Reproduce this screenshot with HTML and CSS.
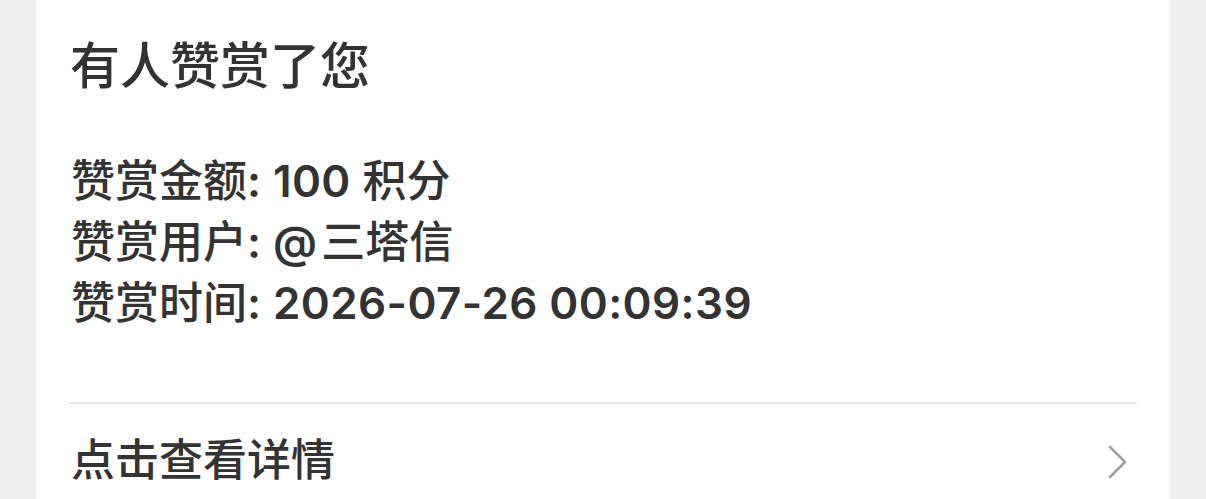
FILE: index.html
```html
<!DOCTYPE html>
<html lang="zh-CN">
<head>
<meta charset="utf-8">
<link rel="stylesheet" href="styles.css">
</head>
<body>
<div class="card">
  <div class="title">有人赞赏了您</div>
  <div class="info">
    <div class="line">赞赏金额<span class="lat">: 100</span> 积分</div>
    <div class="line">赞赏用户<span class="lat">: <span class="at">@</span></span>三塔信</div>
    <div class="line">赞赏时间<span class="lat">: 2026-07-26 00:09:39</span></div>
  </div>
  <div class="footer">
    <span class="link">点击查看详情</span>
    <svg class="chev" width="24" height="36" viewBox="0 0 24 36"><path d="M4 3 L19 18 L4 33" fill="none" stroke="#a0a0a0" stroke-width="2.6" stroke-linecap="round" stroke-linejoin="round"/></svg>
  </div>
</div>
</body>
</html>
```
FILE: styles.css
```css
html, body {
  margin: 0;
  padding: 0;
  background: #efefef;
  height: 100%;
  overflow: hidden;
}
body {
  font-family: "Inter", "Noto Sans CJK SC", sans-serif;
  color: #333333;
}
.card {
  margin: 0 36px;
  background: #ffffff;
  padding: 0 33px;
  height: 100%;
}
.title {
  padding-top: 31px;
  font-size: 50px;
  line-height: 70px;
  font-weight: 500;
  padding-left: 1px;
}
.info {
  padding-top: 50px;
  padding-bottom: 68px;
  border-bottom: 2px solid #e8e8e8;
  padding-left: 2px;
}
.line {
  font-size: 44px;
  line-height: 61px;
  font-weight: 500;
}
.lat {
  font-weight: 600;
  letter-spacing: 0.4px;
}
.at {
  margin-right: 4px;
}
.footer {
  display: flex;
  align-items: center;
  justify-content: space-between;
  padding-top: 26px;
  padding-left: 2px;
}
.link {
  font-size: 44px;
  line-height: 61px;
  font-weight: 500;
}
.chev {
  margin-right: 7px;
  margin-top: 2px;
}
```
